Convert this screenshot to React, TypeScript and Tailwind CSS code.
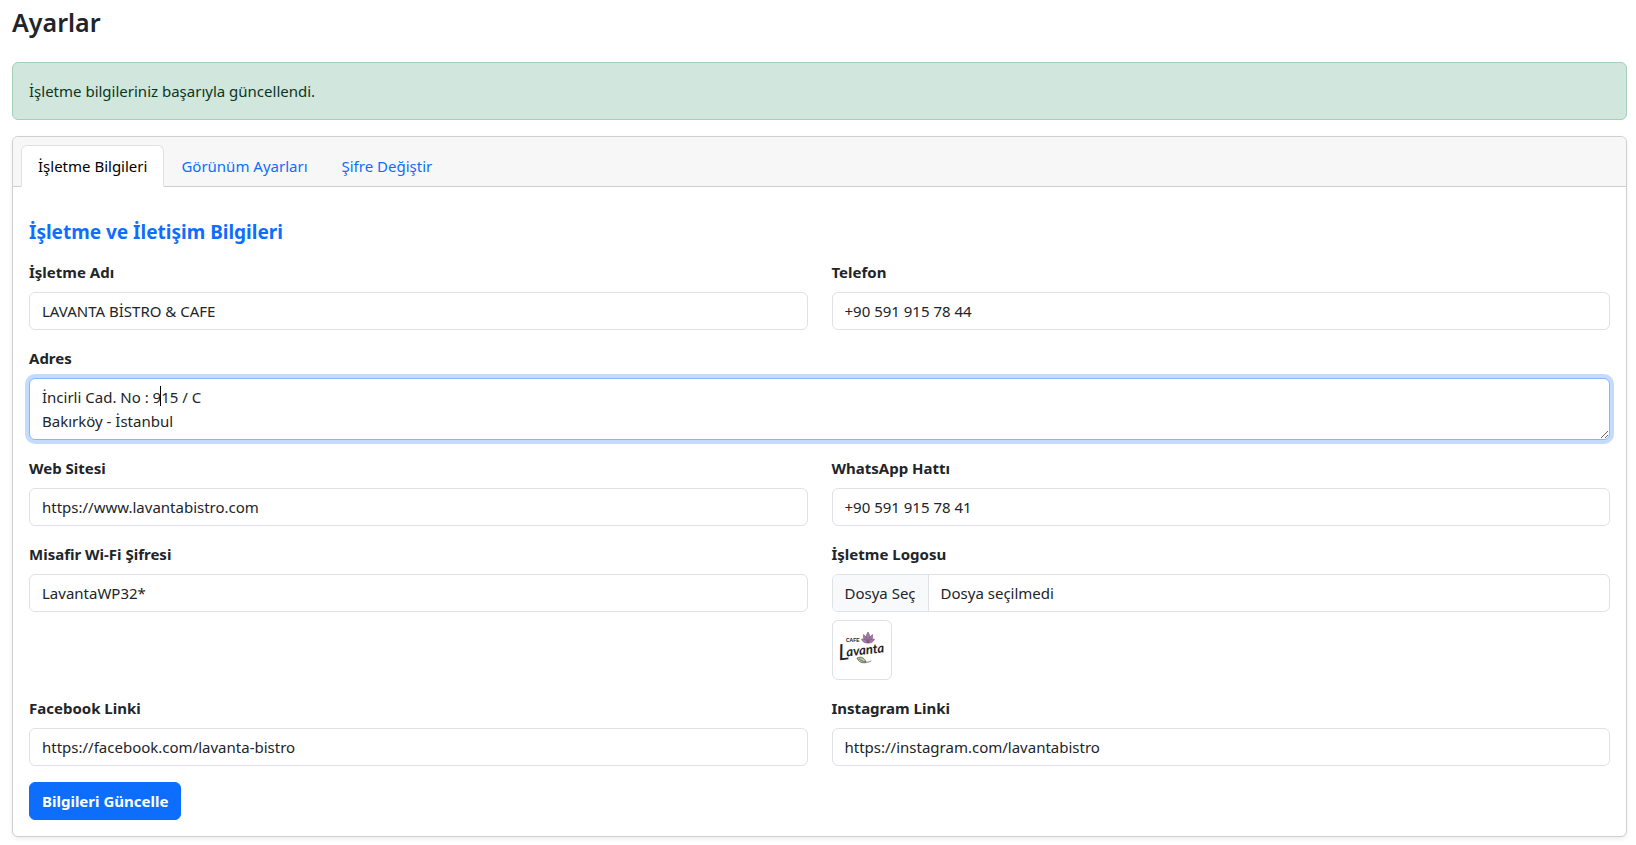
import { useEffect, useRef, useState } from 'react';
import type { ReactNode } from 'react';

const tabs = ['İşletme Bilgileri', 'Görünüm Ayarları', 'Şifre Değiştir'];

const controlClass =
  'block w-full rounded-md border border-[#dee2e6] bg-white px-3 py-[6px] text-[15px] leading-6 text-[#212529] outline-none focus:border-[#86b7fe] focus:ring-4 focus:ring-[#0d6efd]/25';

function Field({ id, label, wide, children }: { id: string; label: string; wide?: boolean; children: ReactNode }) {
  return (
    <div className={wide ? 'md:col-span-2' : ''}>
      <label htmlFor={id} className="mb-2 block font-bold">
        {label}
      </label>
      {children}
    </div>
  );
}

function TextField({ id, label, value, type = 'text' }: { id: string; label: string; value: string; type?: string }) {
  return (
    <Field id={id} label={label}>
      <input id={id} type={type} defaultValue={value} className={controlClass} />
    </Field>
  );
}

function Logo() {
  return (
    <svg viewBox="0 0 50 50" className="size-[50px]" role="img" aria-label="Cafe Lavanta">
      <g fill="#a57aa5" stroke="#5f4068" strokeWidth="0.5">
        <path d="M31 18 C28 15 28.500 11 31 7 C33.500 11 34 15 31 18Z" />
        <path d="M31 18 C27 16 26 13 26.500 9.500 C29 11 30.500 14 31 18Z" />
        <path d="M31 18 C35 16 36 13 35.500 9.500 C33 11 31.500 14 31 18Z" />
        <path d="M31 18 C28 18.500 25.500 17 24.500 14 C27.500 13.500 30 15 31 18Z" />
        <path d="M31 18 C34 18.500 36.500 17 37.500 14 C34.500 13.500 32 15 31 18Z" />
      </g>
      <text x="9" y="17" fontSize="5" fontWeight="700" fill="#222" fontFamily="'Liberation Sans', sans-serif">
        CAFE
      </text>
      <g transform="rotate(-6 4 34)" fill="#222" fontFamily="Lato, sans-serif" fontStyle="italic">
        <text x="2" y="35" fontSize="22">
          L
        </text>
        <text x="10" y="32" fontSize="13" fontWeight="700">
          avanta
        </text>
      </g>
      <path d="M20 33 C24 31 28 33 29 37.500 C25 38.500 21.500 37 20 33Z" fill="#b9c4a0" stroke="#46503a" strokeWidth="0.700" />
      <path d="M22 34 C26 37 30 38.500 34 36" fill="none" stroke="#46503a" strokeWidth="0.700" strokeLinecap="round" />
    </svg>
  );
}

export default function App() {
  const [active, setActive] = useState(0);
  const [fileName, setFileName] = useState('Dosya seçilmedi');
  const [initialCaret, setInitialCaret] = useState(true);
  const address = useRef<HTMLTextAreaElement>(null);

  useEffect(() => {
    address.current?.focus();
    address.current?.setSelectionRange(19, 19);
  }, []);

  const hideInitialCaret = () => setInitialCaret(false);

  return (
    <main className="bg-white pr-[9px] pb-2 pl-3 font-['Noto_Sans',sans-serif] text-[15px] leading-6 text-[#212529]">
      <h1 className="pt-[5px] pb-[23px] text-[25px] leading-[34px] font-semibold">Ayarlar</h1>

      <div role="alert" className="mb-4 rounded-md border border-[#a3cfbb] bg-[#d1e7dd] p-4 text-[#0a3622]">
        İşletme bilgileriniz başarıyla güncellendi.
      </div>

      <section className="rounded-md border border-[#cfcfcf] bg-white shadow-[0_2px_4px_rgba(0,0,0,0.075)]">
        <div className="rounded-t-md border-b border-[#cfcfcf] bg-[#f7f7f7] px-2 pt-2">
          <div role="tablist" className="-mb-px flex">
            {tabs.map((tab, i) => (
              <button
                key={tab}
                type="button"
                role="tab"
                aria-selected={i === active}
                onClick={() => setActive(i)}
                className={
                  i === active
                    ? 'rounded-t-md border border-[#dee2e6] border-b-white bg-white px-4 py-2 text-black'
                    : 'rounded-t-md border border-transparent px-4 py-2 text-[#0d6efd]'
                }
              >
                {tab}
              </button>
            ))}
          </div>
        </div>

        <form className="p-4" onSubmit={(e) => e.preventDefault()}>
          <h2 className="mt-4 mb-[15px] text-[19px] leading-[26px] font-bold text-[#0d6efd]">
            İşletme ve İletişim Bilgileri
          </h2>

          <div className="grid gap-x-6 gap-y-4 md:grid-cols-2">
            <TextField id="name" label="İşletme Adı" value="LAVANTA BİSTRO & CAFE" />
            <TextField id="phone" label="Telefon" type="tel" value="+90 591 915 78 44" />
            <Field id="address" label="Adres" wide>
              <div className="relative">
                <textarea
                  id="address"
                  ref={address}
                  rows={2}
                  defaultValue={'İncirli Cad. No : 915 / C\nBakırköy - İstanbul'}
                  onBlur={hideInitialCaret}
                  onKeyDown={hideInitialCaret}
                  onPointerDown={hideInitialCaret}
                  className={controlClass}
                />
                {initialCaret && (
                  <span aria-hidden="true" className="pointer-events-none absolute top-2 left-[131px] h-5 w-px bg-black" />
                )}
              </div>
            </Field>
            <TextField id="website" label="Web Sitesi" type="url" value="https://www.lavantabistro.com" />
            <TextField id="whatsapp" label="WhatsApp Hattı" type="tel" value="+90 591 915 78 41" />
            <TextField id="wifi" label="Misafir Wi-Fi Şifresi" value="LavantaWP32*" />
            <Field id="logo" label="İşletme Logosu">
              <label htmlFor="logo" className="relative flex overflow-hidden rounded-md border border-[#dee2e6] bg-white">
                <input
                  id="logo"
                  type="file"
                  accept="image/*"
                  className="sr-only"
                  onChange={(e) => setFileName(e.target.files?.[0]?.name ?? 'Dosya seçilmedi')}
                />
                <span className="border-r border-[#dee2e6] bg-[#f8f9fa] px-3 py-[6px]">Dosya Seç</span>
                <span className="px-3 py-[6px]">{fileName}</span>
              </label>
              <div className="mt-2 w-fit rounded-md border border-[#dee2e6] bg-white p-1">
                <Logo />
              </div>
            </Field>
            <TextField id="facebook" label="Facebook Linki" type="url" value="https://facebook.com/lavanta-bistro" />
            <TextField id="instagram" label="Instagram Linki" type="url" value="https://instagram.com/lavantabistro" />
          </div>

          <button type="submit" className="mt-4 rounded-md border border-[#0d6efd] bg-[#0d6efd] px-3 py-[6px] font-bold text-white">
            Bilgileri Güncelle
          </button>
        </form>
      </section>
    </main>
  );
}
